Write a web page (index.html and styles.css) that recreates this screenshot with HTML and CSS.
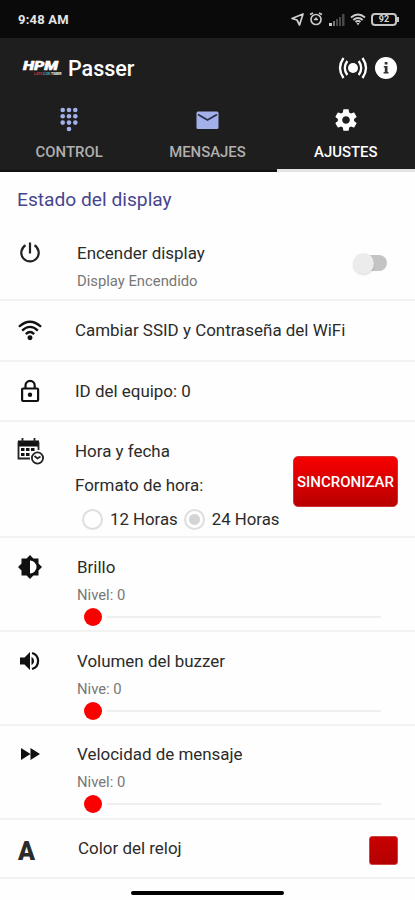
FILE: index.html
```html
<!DOCTYPE html>
<html lang="es">
<head>
  <meta charset="UTF-8">
  <meta name="viewport" content="width=device-width, initial-scale=1">
  <title>HPM Passer</title>
  <link rel="stylesheet" href="styles.css">
</head>
<body>
  <!-- Status bar -->
  <div class="status-bar">
    <span class="time">9:48 AM</span>
    <div class="status-icons">
      <svg width="13" height="13" viewBox="0 0 13 13"><path d="M12 1 L8.5 12 L6 7 L1 5.5 Z" fill="none" stroke="#d0d0d0" stroke-width="1.7" stroke-linejoin="round"/></svg>
      <svg class="alarm" width="14" height="14" viewBox="0 0 14 14" fill="none" stroke="#c8c8c8" stroke-width="1.7"><circle cx="7" cy="7.5" r="5"/><path d="M1 2.500 L4 1 M13 2.500 L10 1 M4.800 7.500 H9 M7 5.500 V8"/></svg>
      <svg class="signal" width="17" height="13" viewBox="0 0 17 13"><path d="M1 10h3v3H1z" fill="#ccc"/><path d="M5 8h2v5H5z" fill="#777"/><path d="M8 6h2v7H8zM11 4h2v9h-2zM14 1h2.500v12H14z" fill="#484848"/></svg>
      <svg class="wifi" width="16" height="13" viewBox="0 0 16 13" fill="none" stroke="#ccc" stroke-width="1.9"><path d="M1 4.500 Q8 -1.500 15 4.500 M3.300 7 Q8 3 12.700 7 M5.500 9 Q8 7 10.500 9"/><path d="M6.500 10 H9.500 L8 12.500Z" fill="#ccc" stroke="none"/></svg>
      <span class="battery">92</span>
    </div>
  </div>

  <!-- App bar -->
  <header class="app-bar">
    <div class="logo">
      <span class="logo-name">HPM</span>
      <span class="logo-sub"><span class="red">LATE</span> <span class="blue">CON</span> TIMER</span>
    </div>
    <h1>Passer</h1>
    <svg class="broadcast" width="30" height="24" viewBox="0 0 30 24" fill="none" stroke="#fff" stroke-width="2.300"><circle cx="15" cy="12" r="5" fill="#fff" stroke="none"/><path d="M5.500 2 Q-1.500 12 5.500 22 M24.500 2 Q31.500 12 24.500 22 M9.300 5 Q4.300 12 9.300 19 M20.700 5 Q25.700 12 20.700 19"/></svg>
    <svg class="info" width="22" height="22" viewBox="0 0 22 22"><circle cx="11" cy="11" r="11" fill="#fff"/><path d="M9.700 5h2.800v2.500H9.700zM8.800 9h3.700v6h1v1.500H8.600V15h1.200v-4.400h-1z" fill="#333"/></svg>
  </header>

  <!-- Tabs -->
  <nav class="tabs">
    <a class="tab">
      <svg width="24" height="26" viewBox="0 0 24 26" fill="#a3b1ea"><circle cx="5.700" cy="3" r="2.300"/><circle cx="12" cy="3" r="2.300"/><circle cx="18.300" cy="3" r="2.300"/><circle cx="5.700" cy="9.300" r="2.300"/><circle cx="12" cy="9.300" r="2.300"/><circle cx="18.300" cy="9.300" r="2.300"/><circle cx="5.700" cy="15.600" r="2.300"/><circle cx="12" cy="15.600" r="2.300"/><circle cx="18.300" cy="15.600" r="2.300"/><circle cx="12" cy="22" r="2.300"/></svg>
      <span>CONTROL</span>
    </a>
    <a class="tab">
      <svg width="24" height="26" viewBox="0 0 24 26"><rect x="1.500" y="4.500" width="22" height="17.500" rx="1.500" fill="#a3b1ea"/><path d="M3 7.500 L12.500 13 L22 7.500" fill="none" stroke="#28304a" stroke-width="1.800"/></svg>
      <span>MENSAJES</span>
    </a>
    <a class="tab active">
      <svg width="26" height="26" viewBox="0 0 24 24" fill="#fff"><path d="M19.430 12.980c.04-.32.07-.64.07-.98s-.03-.66-.07-.98l2.110-1.650c.19-.15.24-.42.12-.64l-2-3.460c-.12-.22-.39-.3-.61-.22l-2.490 1c-.52-.4-1.080-.73-1.690-.98l-.38-2.650C14.460 2.180 14.250 2 14 2h-4c-.25 0-.46.18-.49.42l-.38 2.650c-.61.25-1.170.59-1.690.98l-2.490-1c-.23-.09-.49 0-.61.22l-2 3.460c-.13.22-.07.49.12.64l2.110 1.650c-.04.32-.07.65-.07.98s.03.66.07.98l-2.110 1.650c-.19.15-.24.42-.12.64l2 3.460c.12.22.39.3.61.22l2.490-1c.52.4 1.080.73 1.690.98l.38 2.650c.03.24.24.42.49.42h4c.25 0 .46-.18.49-.42l.38-2.650c.61-.25 1.170-.59 1.690-.98l2.490 1c.23.09.49 0 .61-.22l2-3.460c.12-.22.07-.49-.12-.64l-2.110-1.650zM12 15.500c-1.930 0-3.500-1.570-3.500-3.500s1.570-3.500 3.500-3.500 3.500 1.570 3.500 3.500-1.570 3.500-3.500 3.500z"/></svg>
      <span>AJUSTES</span>
    </a>
  </nav>

  <main>
    <h2>Estado del display</h2>

    <section class="row row-power">
      <svg class="icon" viewBox="0 0 24 24" fill="none" stroke="#222" stroke-width="2.200"><path d="M12 1.500V12.500M7.500 4.300A8.700 8.700 0 1 0 16.500 4.300"/></svg>
      <div class="content">
        <p class="label">Encender display</p>
        <p class="sub">Display Encendido</p>
      </div>
      <div class="switch"><span class="knob"></span></div>
    </section>

    <section class="row row-simple">
      <svg class="icon" viewBox="0 0 26 24" fill="none" stroke="#111" stroke-width="2.500"><path d="M1 8.500Q13 -2.500 25 8.500M4.500 12.700Q13 4.500 21.500 12.700M8.500 16.500Q13 12 17.500 16.500"/><circle cx="13" cy="20.500" r="2.700" fill="#111" stroke="none"/></svg>
      <div class="content"><p class="label">Cambiar SSID y Contraseña del WiFi</p></div>
    </section>

    <section class="row row-simple row-id">
      <svg class="icon" viewBox="0 0 24 24" fill="none" stroke="#111" stroke-width="2.200"><rect x="4.100" y="9.500" width="16" height="12.500" rx="1"/><path d="M7.500 9.500V6.500a4.600 4.600 0 0 1 9.200 0V9.500"/><circle cx="12" cy="15.800" r="2.200" fill="#111" stroke="none"/></svg>
      <div class="content"><p class="label">ID del equipo: 0</p></div>
    </section>

    <section class="row row-time">
      <svg class="icon calendar" viewBox="0 0 27 27" fill="none" stroke="#222" stroke-width="1.800"><path d="M1 2.500h21v6H1z" fill="#111" stroke="none"/><path d="M1.500 3.500V20.500H13M21.500 4V12M5.500 0V5M17.500 0V5"/><path d="M4 10h3.500v3H4zM9 10h3.500v3H9zM14 10h3.500v3H14zM4 15h3.500v3H4zM9 15h3.500v3H9z" fill="#111" stroke="none"/><circle cx="20.500" cy="20" r="5.600" fill="#fff"/><path d="M17.500 18L20.500 20.500L23.500 18.500"/></svg>
      <div class="content">
        <p class="label">Hora y fecha</p>
        <p class="label format">Formato de hora:</p>
        <div class="radios">
          <span class="radio"></span><span>12 Horas</span>
          <span class="radio checked"></span><span>24 Horas</span>
        </div>
      </div>
      <button class="sync">SINCRONIZAR</button>
    </section>

    <section class="row row-slider">
      <svg class="icon" viewBox="0 0 24 24"><path d="M12 0 L15.400 3.500H20.500V8.600L24 12L20.500 15.400V20.500H15.400L12 24L8.600 20.500H3.500V15.400L0 12L3.500 8.600V3.500H8.600Z" fill="#111"/><path d="M12 5.500a6.500 6.500 0 0 1 0 13z" fill="#fff"/></svg>
      <div class="content">
        <p class="label">Brillo</p>
        <p class="sub">Nivel: 0</p>
        <div class="slider"><span class="thumb"></span><span class="track"></span></div>
      </div>
    </section>

    <section class="row row-slider">
      <svg class="icon" viewBox="0 0 24 24" fill="#111"><path d="M2 8.500v7h4.500L12 21V3L6.500 8.500zM13.500 8v8c1.700-.8 2.500-2.200 2.500-4s-.8-3.200-2.500-4z"/><path d="M14 4a8.300 8.300 0 0 1 0 16" fill="none" stroke="#111" stroke-width="2.200"/></svg>
      <div class="content">
        <p class="label">Volumen del buzzer</p>
        <p class="sub">Nive: 0</p>
        <div class="slider"><span class="thumb"></span><span class="track"></span></div>
      </div>
    </section>

    <section class="row row-slider row-speed">
      <svg class="icon" viewBox="0 0 24 24" fill="#111"><path d="M3 6L12.500 12L3 18zM12.500 6L22 12L12.500 18z"/></svg>
      <div class="content">
        <p class="label">Velocidad de mensaje</p>
        <p class="sub">Nivel: 0</p>
        <div class="slider"><span class="thumb"></span><span class="track"></span></div>
      </div>
    </section>

    <section class="row row-color">
      <span class="letter">A</span>
      <div class="content"><p class="label">Color del reloj</p></div>
      <span class="swatch"></span>
    </section>
  </main>

  <div class="home-bar"><span></span></div>
</body>
</html>
```
FILE: styles.css
```css
* {
  box-sizing: border-box;
}
body {
  margin: 0;
  width: 415px;
  height: 900px;
  display: flex;
  flex-direction: column;
  overflow: hidden;
  background: #fefefe;
  font-family: Roboto, sans-serif;
  color: #2b2b2b;
}
h1, h2, p {
  margin: 0;
}
svg {
  display: block;
  flex: none;
}

/* Status bar */
.status-bar {
  height: 38px;
  flex: none;
  display: flex;
  align-items: center;
  justify-content: space-between;
  padding: 0 17px 0 18px;
  background: #0a0a0a;
}
.time {
  color: #e4e4e4;
  font-size: 13px;
  font-weight: 700;
  letter-spacing: 0.2px;
}
.status-icons {
  display: flex;
  align-items: center;
  gap: 5px;
}
.battery {
  position: relative;
  width: 26px;
  height: 13px;
  margin-right: 1px;
  border: 2px solid #c4c4c4;
  border-radius: 4px;
  color: #d8d8d8;
  font-size: 9px;
  font-weight: 700;
  line-height: 9px;
  text-align: center;
}
.battery::after {
  content: "";
  position: absolute;
  right: -4px;
  top: 2px;
  width: 2px;
  height: 5px;
  background: #c4c4c4;
}

/* App bar */
.app-bar {
  height: 60px;
  flex: none;
  display: flex;
  align-items: center;
  padding: 0 18px 0 23px;
  background: #1e1e1e;
  color: #fff;
}
.logo {
  width: 45px;
  display: flex;
  flex-direction: column;
}
.logo-name {
  font-size: 12px;
  font-weight: 900;
  font-style: italic;
  line-height: 12px;
  transform: scaleX(1.35);
  transform-origin: left;
  -webkit-text-stroke: 0.5px #fff;
}
.logo-sub {
  padding-left: 11px;
  font-size: 3.5px;
  font-weight: 700;
  line-height: 4px;
  white-space: nowrap;
}
.red {
  color: #d33;
}
.blue {
  color: #49a3c9;
}
h1 {
  flex: 1;
  font-size: 21.5px;
  font-weight: 500;
}
.info {
  margin-left: 7px;
}

/* Tabs */
.tabs {
  height: 74px;
  flex: none;
  display: grid;
  grid-template-columns: repeat(3, 1fr);
  background: #1e1e1e;
}
.tab {
  display: flex;
  flex-direction: column;
  align-items: center;
  padding-top: 9px;
  border-bottom: 2px solid #111;
  color: #b0b0b0;
  font-size: 14.9px;
  font-weight: 500;
  line-height: 18px;
}
.tab svg {
  height: 26px;
  margin-bottom: 10px;
}
.active {
  border-bottom: 3px solid #e6e3e3;
  color: #fff;
}

/* Settings list */
h2 {
  height: 50px;
  padding: 15px 17px 0;
  color: #47458f;
  font-size: 19.2px;
  font-weight: 400;
  line-height: 25px;
}
.row {
  display: flex;
  align-items: flex-start;
  padding: 17px 17px 0 18px;
  border-bottom: 2px solid #f2f2f2;
}
.icon {
  width: 24px;
  height: 24px;
}
.content {
  flex: 1;
  padding: 2px 0 0 35px;
}
.label {
  font-size: 16.95px;
  line-height: 20px;
}
.sub {
  margin-top: 9px;
  color: #777;
  font-size: 14.8px;
  line-height: 18px;
}
.row-power {
  height: 79px;
  padding-top: 19px;
}
.row-simple {
  height: 61px;
}
.row-simple .content {
  padding-left: 33px;
}
.row-id {
  height: 60px;
}
.switch {
  position: relative;
  width: 29px;
  height: 16px;
  margin: 14px 11px 0 0;
  border-radius: 8px;
  background: #c4c4c4;
}
.knob {
  position: absolute;
  left: -5px;
  top: -2px;
  width: 21px;
  height: 21px;
  border-radius: 50%;
  background: #ececec;
  box-shadow: 0 1px 2px rgba(0,0,0,0.15);
}
.row-time {
  height: 116px;
}
.row-time .content {
  padding: 2px 0 0 33px;
}
.calendar {
  width: 27px;
  height: 27px;
  margin: -1px -2px 0 -1px;
}
.format {
  margin-top: 14px;
}
.radios {
  display: flex;
  align-items: center;
  margin: 13px 0 0 7px;
  font-size: 16.8px;
  line-height: 22px;
  white-space: nowrap;
}
.radio {
  width: 21px;
  height: 21px;
  flex: none;
  margin-right: 7px;
  border: 2px solid #dedede;
  border-radius: 50%;
}
.checked {
  margin-left: 6px;
  background: radial-gradient(circle, #d4d4d4 5px, transparent 6px);
}
.sync {
  width: 105px;
  height: 51px;
  flex: none;
  margin-top: 17px;
  padding: 0;
  border: 1px solid #c33;
  border-radius: 5px;
  background: linear-gradient(#f80000, #b80000);
  color: #fff;
  font-family: Roboto, sans-serif;
  font-size: 15px;
  font-weight: 500;
}
.row-slider {
  height: 94px;
}
.slider {
  display: flex;
  align-items: center;
  gap: 4px;
  margin: 4px 17px 0 7px;
}
.thumb {
  width: 18px;
  height: 18px;
  border-radius: 50%;
  background: #fb0000;
}
.track {
  flex: 1;
  height: 2px;
  background: #efefef;
}
.row-speed {
  padding-top: 16px;
}
.row-color {
  height: 59px;
}
.row-color .content {
  padding: 1px 0 0 36px;
}
.letter {
  width: 24px;
  margin-top: 2px;
  font-size: 25px;
  font-weight: 900;
  line-height: 26px;
}
.swatch {
  width: 29px;
  height: 29px;
  margin-top: -1px;
  border: 1px solid #c44;
  border-radius: 3px;
  background: linear-gradient(#c80000, #b40000);
}

/* Bottom navigation handle */
.home-bar {
  display: flex;
  justify-content: center;
  padding-top: 12px;
}
.home-bar span {
  width: 153px;
  height: 4px;
  border-radius: 2px;
  background: #000;
}
```
